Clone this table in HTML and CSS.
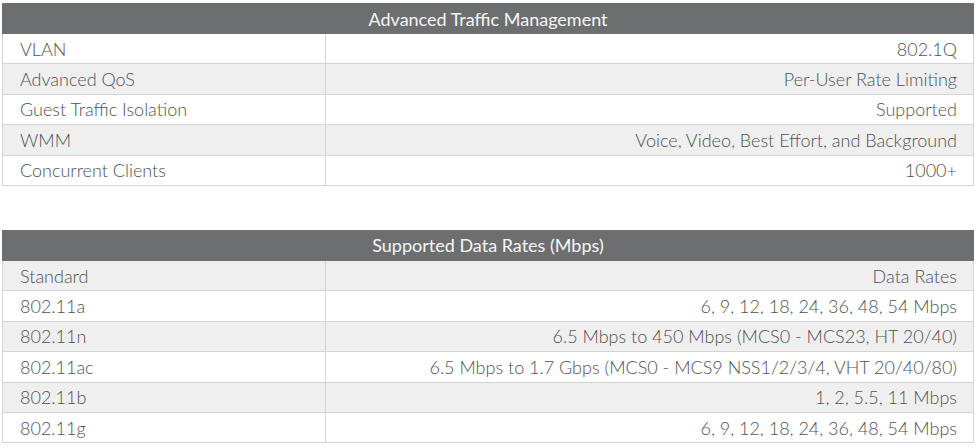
FILE: index.html
```html
<!DOCTYPE html>
<html>
<head>
<meta charset="utf-8">
<link rel="stylesheet" href="styles.css">
</head>
<body>
<div class="page">
<table class="spec">
  <colgroup><col class="ck"><col class="cv"></colgroup>
  <thead>
    <tr><th colspan="2">Advanced Traffic Management</th></tr>
  </thead>
  <tbody>
    <tr><td class="k">VLAN</td><td class="v">802.1Q</td></tr>
    <tr class="alt"><td class="k">Advanced QoS</td><td class="v">Per-User Rate Limiting</td></tr>
    <tr><td class="k">Guest Traffic Isolation</td><td class="v">Supported</td></tr>
    <tr class="alt"><td class="k">WMM</td><td class="v">Voice, Video, Best Effort, and Background</td></tr>
    <tr><td class="k">Concurrent Clients</td><td class="v">1000+</td></tr>
  </tbody>
</table>

<table class="spec second">
  <colgroup><col class="ck"><col class="cv"></colgroup>
  <thead>
    <tr><th colspan="2">Supported Data Rates (Mbps)</th></tr>
  </thead>
  <tbody>
    <tr class="alt"><td class="k">Standard</td><td class="v">Data Rates</td></tr>
    <tr><td class="k">802.11a</td><td class="v">6, 9, 12, 18, 24, 36, 48, 54 Mbps</td></tr>
    <tr class="alt"><td class="k">802.11n</td><td class="v">6.5 Mbps to 450 Mbps (MCS0 - MCS23, HT 20/40)</td></tr>
    <tr><td class="k">802.11ac</td><td class="v">6.5 Mbps to 1.7 Gbps (MCS0 - MCS9 NSS1/2/3/4, VHT 20/40/80)</td></tr>
    <tr class="alt"><td class="k">802.11b</td><td class="v">1, 2, 5.5, 11 Mbps</td></tr>
    <tr><td class="k">802.11g</td><td class="v">6, 9, 12, 18, 24, 36, 48, 54 Mbps</td></tr>
  </tbody>
</table>
</div>
</body>
</html>
```

FILE: styles.css
```css
html, body {
  margin: 0;
  padding: 0;
  background: #ffffff;
}

.page {
  padding: 3px 0 0 2px;
  font-family: Lato, "Liberation Sans", sans-serif;
}

.spec {
  width: 972px;
  border-collapse: collapse;
  table-layout: fixed;
}

.spec col.ck {
  width: 323px;
}

.spec.second {
  margin-top: 44px;
}

.spec th {
  background: #6d6e70;
  color: #f6f6f6;
  font-weight: 400;
  font-size: 18px;
  height: 30px;
  padding: 0;
  text-align: center;
  border: 1px solid #6d6e70;
  box-sizing: border-box;
}

.spec td {
  height: 30.4px;
  padding: 0 16px 0 17px;
  font-size: 18px;
  font-weight: 300;
  color: #505153;
  border: 1px solid #d4d4d4;
  box-sizing: border-box;
  white-space: nowrap;
}

.spec td.k {
  text-align: left;
}

.spec td.v {
  text-align: right;
}

.spec tr.alt td {
  background: #efefef;
}
```
